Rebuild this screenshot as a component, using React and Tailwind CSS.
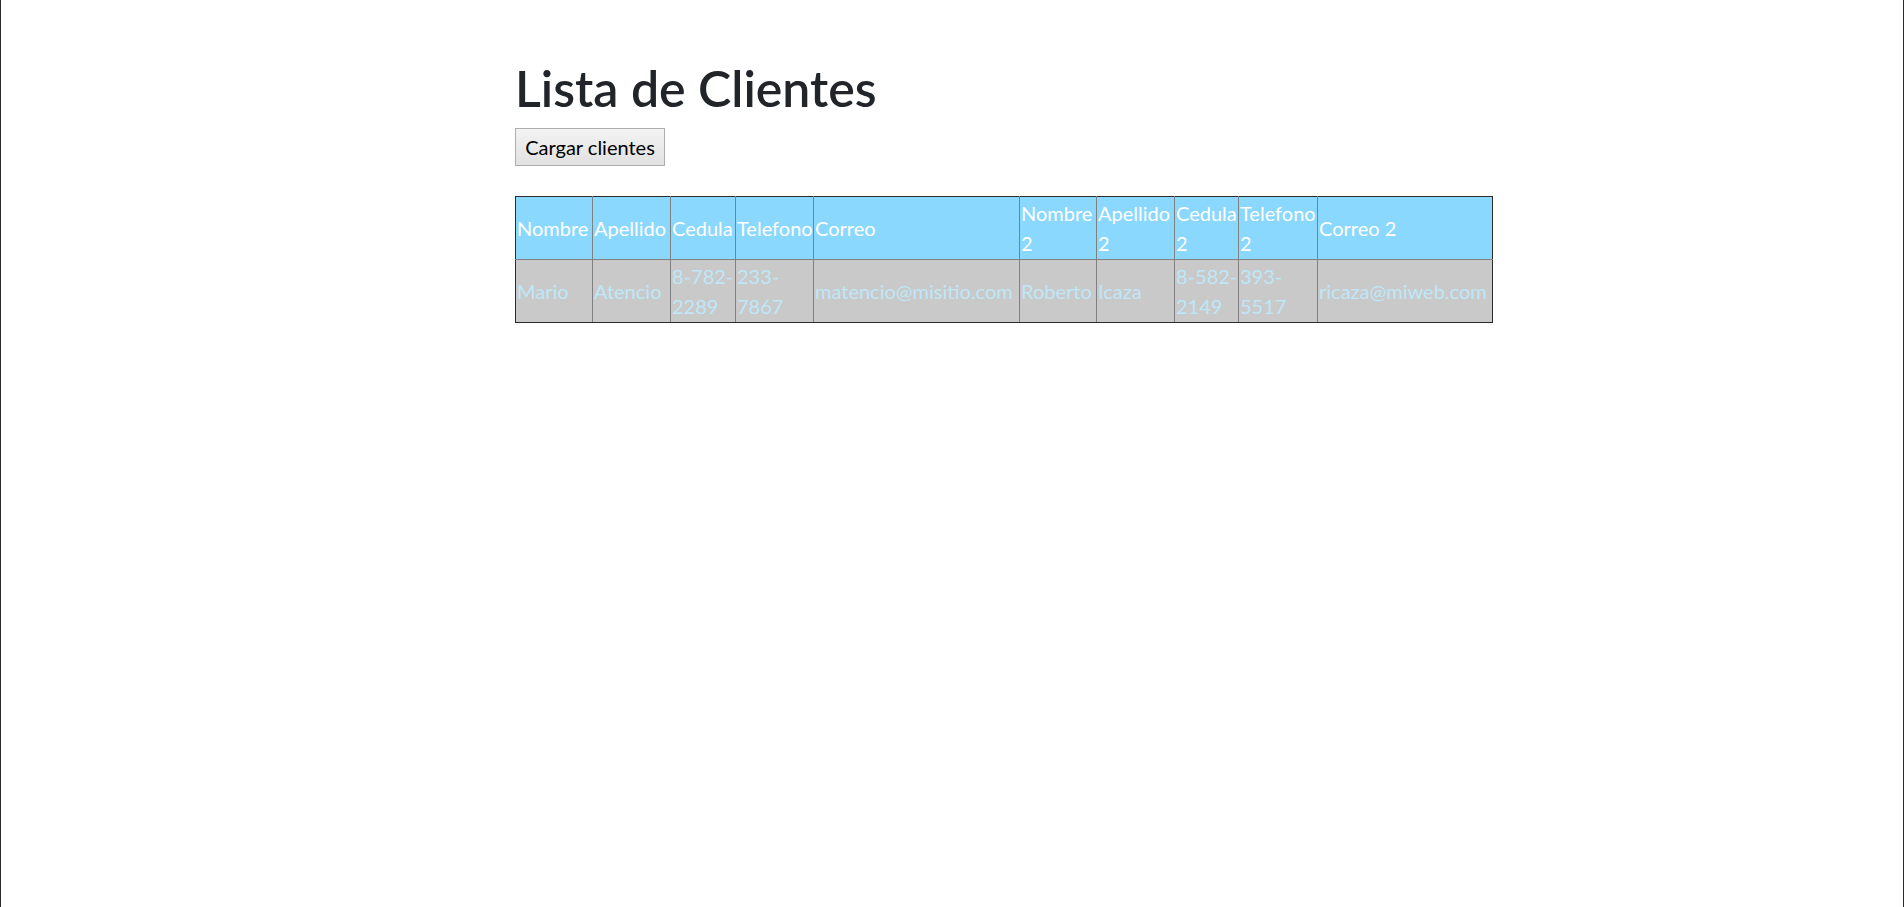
import React from "react";

const cols = [77, 78, 65, 78, 206, 77, 78, 64, 79, 175];
const headers = ["Nombre", "Apellido", "Cedula", "Telefono", "Correo", "Nombre 2", "Apellido 2", "Cedula 2", "Telefono 2", "Correo 2"];
const row = [
  ["Mario"],
  ["Atencio"],
  ["8-782-", "2289"],
  ["233-", "7867"],
  ["matencio@misitio.com"],
  ["Roberto"],
  ["Icaza"],
  ["8-582-", "2149"],
  ["393-", "5517"],
  ["ricaza@miweb.com"],
];

export default function App() {
  const last = headers.length - 1;
  return (
    <div
      className="w-full h-[907px] border-l border-r border-[#2b2b2b] bg-white overflow-hidden"
      style={{ fontFamily: "Lato, 'Liberation Sans', sans-serif" }}
    >
      <div className="ml-[514px] pt-[58px] w-[977px]">
        <h1 className="text-[50px] leading-[60px] font-semibold text-[#212529] mb-[10px]">Lista de Clientes</h1>
        <button className="w-[150px] h-[38px] text-[20px] leading-[30px] text-black border border-[#adadad] bg-gradient-to-b from-[#f3f3f3] to-[#e1e1e1]">
          Cargar clientes
        </button>
        <table className="mt-[30px] table-fixed border-collapse w-[977px] text-[20px] leading-[30px]">
          <colgroup>
            {cols.map((w, i) => (
              <col key={i} style={{ width: w }} />
            ))}
          </colgroup>
          <thead>
            <tr className="bg-[#8ad8fd]">
              {headers.map((h, i) => (
                <th
                  key={i}
                  className={`p-[1px] text-left font-normal text-white align-middle border border-[#808080] border-t-[#2b2b2b] ${i === 0 ? "border-l-[#2b2b2b]" : ""} ${i === last ? "border-r-[#2b2b2b]" : ""}`}
                >
                  {h}
                </th>
              ))}
            </tr>
          </thead>
          <tbody>
            <tr className="bg-[#c9c9c9]">
              {row.map((parts, i) => (
                <td
                  key={i}
                  className={`p-[1px] text-left text-[#bfe7f7] align-middle whitespace-nowrap border border-[#808080] border-b-[#2b2b2b] ${i === 0 ? "border-l-[#2b2b2b]" : ""} ${i === last ? "border-r-[#2b2b2b]" : ""}`}
                >
                  {parts.map((p, j) => (
                    <React.Fragment key={j}>
                      {j > 0 && <br />}
                      {p}
                    </React.Fragment>
                  ))}
                </td>
              ))}
            </tr>
          </tbody>
        </table>
      </div>
    </div>
  );
}
